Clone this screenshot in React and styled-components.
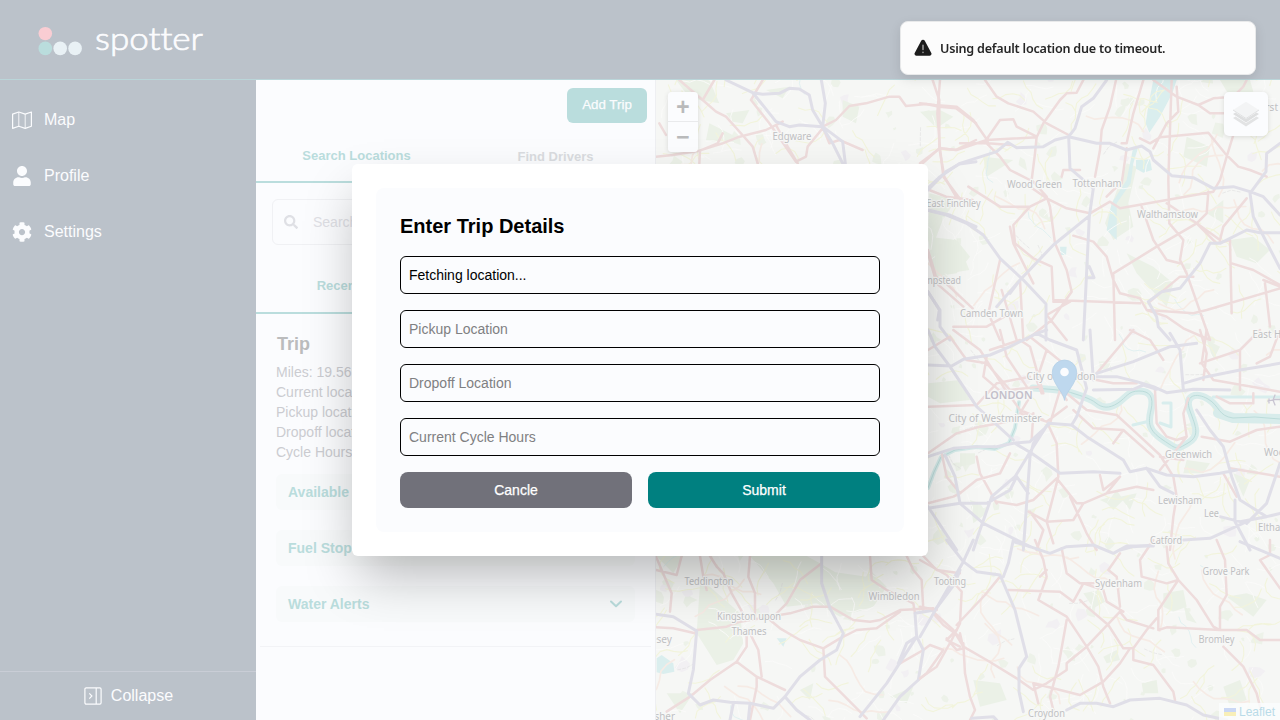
import React from "react";
import styled, { createGlobalStyle } from "styled-components";
import { FaUser, FaCog, FaSearch } from "react-icons/fa";

const GlobalStyle = createGlobalStyle`
  *, *::before, *::after { box-sizing: border-box; }
  body { margin: 0; font-family: "Liberation Sans", Arial, sans-serif; background: #fbfcfe; overflow: hidden; }
  button, input { font: inherit; }
  h2, h3, p { margin: 0; }
`;

const Page = styled.div`
  display: flex;
  flex-direction: column;
  width: 1280px;
  height: 720px;
`;
const Header = styled.header`
  display: flex;
  flex: none;
  height: 80px;
  padding: 20px 36px;
  background: #bbc2ca;
  border-bottom: 1px solid #bad5d9;
`;
const Body = styled.div`
  display: flex;
  flex: 1;
  min-height: 0;
`;
const Sidebar = styled.aside`
  display: flex;
  flex-direction: column;
  flex: none;
  width: 256px;
  background: #bbc2ca;
`;
const Nav = styled.nav`
  display: flex;
  flex-direction: column;
  flex: 1;
  gap: 16px;
  padding-top: 20px;
`;
const NavItem = styled.a`
  display: flex;
  align-items: center;
  gap: 12px;
  height: 40px;
  padding: 0 12px;
  color: #fbfcfe;
  font-size: 16px;
`;
const Collapse = styled.button`
  display: flex;
  align-items: center;
  justify-content: center;
  gap: 9px;
  height: 49px;
  padding: 0 0 0 1px;
  border: 0;
  border-top: 1px solid #c9cdd6;
  background: none;
  color: #fbfcfe;
  font-size: 16px;
`;
const Panel = styled.section`
  display: flex;
  flex-direction: column;
  flex: none;
  width: 400px;
  background: #fbfcfe;
  border-right: 1px solid #eeeff2;
`;
const PanelTop = styled.div`
  display: flex;
  justify-content: flex-end;
  height: 51px;
  padding: 8px 8px 0 0;
`;
const AddTrip = styled.button`
  width: 80px;
  height: 35px;
  padding: 0 0 2px;
  border: 0;
  border-radius: 6px;
  background: #badddd;
  color: #fbfcfe;
  font-size: 13.33px;
  -webkit-text-stroke: 0.25px #fbfcfe;
`;
const Tabs = styled.div`
  display: flex;
  height: ${(p) => p.$height}px;
`;
const Tab = styled.button`
  flex: 1;
  padding: ${(p) => p.$shift || "0"};
  border: 0;
  border-bottom: ${(p) => (p.$active ? "2px solid #badddd" : "0")};
  background: none;
  color: ${(p) => (p.$active ? "#badddd" : "#dadce0")};
  font-size: 13px;
  font-weight: 700;
`;
const SearchBox = styled.div`
  display: flex;
  align-items: center;
  gap: 15px;
  height: 46px;
  margin: 16px 16px 12px;
  padding: 0 11px;
  border: 1px solid #f0f1f4;
  border-radius: 6px;
  color: #dfe0e5;
  font-size: 14px;
`;
const Trip = styled.article`
  margin: 17px 4px 0;
  padding: 0 16px 24px;
  border-bottom: 1px solid #f2f3f6;
`;
const TripTitle = styled.h3`
  height: 31px;
  padding-left: 1px;
  line-height: 27px;
  font-size: 18px;
  color: #bbbcbd;
`;
const TripLine = styled.p`
  height: 20px;
  line-height: 20px;
  font-size: 14px;
  color: #cbccd1;
  white-space: nowrap;
`;
const Sections = styled.div`
  display: flex;
  flex-direction: column;
  gap: 20px;
  margin-top: 12px;
`;
const SectionRow = styled.button`
  display: flex;
  align-items: center;
  justify-content: space-between;
  height: 36px;
  padding: 0 12px;
  border: 0;
  border-radius: 6px;
  background: #f8fafb;
  color: #badddd;
  font-size: 14px;
  font-weight: 700;
`;
const MapArea = styled.main`
  position: relative;
  flex: 1;
  overflow: hidden;
  background: #f6f7f5;
  svg { display: block; }
`;
const ZoomControl = styled.div`
  position: absolute;
  top: 12px;
  left: 12px;
  width: 30px;
  border-radius: 4px;
  overflow: hidden;
  box-shadow: 0 1px 5px rgba(0, 0, 0, 0.12);
`;
const ZoomButton = styled.button`
  display: flex;
  align-items: center;
  justify-content: center;
  width: 30px;
  height: 30px;
  padding: 4px 0 0;
  border: 0;
  border-bottom: ${(p) => (p.$divided ? "1px solid #e9eaec" : "0")};
  background: #fbfcfe;
  color: #b9babb;
  font: 700 23px/28px "Liberation Mono", monospace;
`;
const LayersControl = styled.button`
  position: absolute;
  top: 12px;
  right: 12px;
  display: flex;
  align-items: center;
  justify-content: center;
  width: 44px;
  height: 44px;
  padding: 0;
  border: 0;
  border-radius: 5px;
  background: #fbfcfe;
  box-shadow: 0 1px 5px rgba(0, 0, 0, 0.12);
`;
const Attribution = styled.div`
  position: absolute;
  right: 0;
  bottom: 0;
  display: flex;
  align-items: center;
  gap: 3px;
  height: 17px;
  padding: 0 5px;
  background: rgba(251, 252, 254, 0.8);
  color: #b9dbe8;
  font-size: 12px;
`;
const Overlay = styled.div`
  position: fixed;
  inset: 0;
  display: flex;
  align-items: center;
  justify-content: center;
`;
const Modal = styled.div`
  width: 576px;
  padding: 24px;
  border-radius: 6px;
  background: #fff;
  box-shadow: 0 25px 50px -7px rgba(0, 0, 0, 0.28);
`;
const Form = styled.form`
  display: flex;
  flex-direction: column;
  gap: 16px;
  padding: 24px;
  border-radius: 8px;
  background: #fbfcfe;
`;
const FormTitle = styled.h2`
  font-size: 20px;
  line-height: 28px;
  color: #000;
`;
const Field = styled.input`
  height: 38px;
  padding: 0 8px;
  border: 1px solid #000;
  border-radius: 6px;
  outline: 0;
  background: transparent;
  color: #000;
  font-size: 14px;
  &::placeholder { color: #7f8082; opacity: 1; }
`;
const Actions = styled.div`
  display: flex;
  gap: 16px;
`;
const Action = styled.button`
  flex: 1;
  height: 36px;
  padding: 0;
  border: 0;
  border-radius: 8px;
  background: ${(p) => (p.$primary ? "#008080" : "#71717a")};
  color: #fff;
  font-size: 14px;
  -webkit-text-stroke: 0.25px #fff;
`;
const Toast = styled.div`
  position: fixed;
  top: 21px;
  right: 24px;
  display: flex;
  align-items: center;
  gap: 8px;
  width: 356px;
  height: 54px;
  padding: 0 13px;
  border: 1px solid #e8e9ea;
  border-radius: 8px;
  background: #fcfcfc;
  box-shadow: 0 4px 12px rgba(0, 0, 0, 0.1);
  color: #262626;
  font: 600 12.6px "Noto Sans", "Open Sans", sans-serif;
  letter-spacing: -0.22px;
`;
const Wordmark = styled.text`
  font-family: Lato, sans-serif;
  font-size: 31.5px;
  font-weight: 300;
  font-variant-ligatures: none;
  fill: #fbfcfe;
  stroke: #fbfcfe;
  stroke-width: 0.7px;
`;

const Logo = () => (
  <svg width="172" height="44" viewBox="36 20 172 44" overflow="visible">
    <ellipse cx="45.3" cy="33.6" rx="6.8" ry="6.7" fill="#f9cdd3" />
    <ellipse cx="45.3" cy="48.4" rx="6.8" ry="6.9" fill="#badddd" />
    <ellipse cx="60.2" cy="48.4" rx="6.8" ry="6.9" fill="#e9f1f5" />
    <ellipse cx="75.1" cy="48.4" rx="6.8" ry="6.9" fill="#e9f1f5" />
    <Wordmark x="95" y="50" textLength="108" lengthAdjust="spacingAndGlyphs">spotter</Wordmark>
  </svg>
);

const MapIcon = () => (
  <svg width="20" height="20" viewBox="0 0 20 20" fill="none" stroke="currentColor" strokeLinejoin="round">
    <path strokeWidth="1.2" d="M.6 4.1 6.8 2 13.2 4.1 19.4 2V16.3L13.2 18.4 6.8 16.3.6 18.4Z" />
    <path strokeWidth=".9" d="M6.8 2V16.3M13.2 4.1V18.4" />
  </svg>
);

const CollapseIcon = () => (
  <svg width="18" height="18" viewBox="0 0 18 18" fill="none" stroke="currentColor" strokeWidth="1.2">
    <rect x=".9" y=".9" width="16.2" height="16.2" rx="1.3" />
    <path d="M12.2 1V17M5.3 6.4 7.9 9 5.3 11.6" />
  </svg>
);

const Chevron = () => (
  <svg width="14" height="10" viewBox="0 0 14 10" fill="none" stroke="currentColor" strokeWidth="2" strokeLinecap="round" strokeLinejoin="round">
    <path d="M2 2.5 7 7.3 12 2.5" />
  </svg>
);

/* Small side streets and parks, spread by a fixed pseudo-random sequence. */
const makeRandom = (seed) => () => {
  seed = (seed * 16807) % 2147483647;
  return seed / 2147483647;
};
const random = makeRandom(91);
const wander = (steps, reach) => {
  let x = 650 + random() * 640;
  let y = 75 + random() * 650;
  let angle = random() * 6.28;
  let d = `M${x.toFixed(1)} ${y.toFixed(1)}`;
  for (let i = 0; i < steps; i++) {
    angle += (random() - 0.5) * 1.3;
    x += Math.cos(angle) * reach;
    y += Math.sin(angle) * reach;
    d += `L${x.toFixed(1)} ${y.toFixed(1)}`;
  }
  return d;
};
const blob = (size) => {
  const cx = 650 + random() * 640;
  const cy = 75 + random() * 650;
  const points = [];
  for (let i = 0; i < 7; i++) {
    const r = size * (0.4 + random() * 0.8);
    points.push(`${(cx + Math.cos(i * 0.9) * r).toFixed(1)} ${(cy + Math.sin(i * 0.9) * r).toFixed(1)}`);
  }
  return `M${points.join("L")}Z`;
};
const repeat = (count, make) => Array.from({ length: count }, make).join("");
const parks = repeat(260, () => blob(2 + random() * 6));
const estates = repeat(70, () => blob(3 + random() * 6));
const whiteLanes = repeat(420, () => wander(4, 7));
const lanes = repeat(380, () => wander(5, 7));
const avenues = repeat(46, () => wander(7, 9));
const streams = repeat(16, () => wander(6, 6));
const rails = repeat(22, () => wander(2, 9));

/* Main roads by map sheet; each sheet keeps its own origin and is drawn at one third. */
const sheets = [
  {
    x: 656, y: 80,
    green: "M60 0 160 0 190 70 130 60 90 40ZM210 100 280 90 260 130 230 125ZM160 130 240 170 200 190 150 180ZM330 30 400 20 380 55ZM560 60 610 80 600 130 560 110ZM820 340 900 360 860 420 830 500 816 480ZM850 500 920 520 940 570 880 580Z",
    water: "",
    purple: "M210 0 290 38 300 50 360 125 400 140 430 135 498 140M290 38 320 43 370 40 400 25 430 27 460 45 470 90 500 140M496 0 508 70 500 140 560 185 568 250M498 140 530 190 560 250M816 330 870 275 910 252 960 245M816 390 880 405 960 440M816 635 850 690 845 720",
    red: "M175 0 140 60 70 0M140 60 180 95 210 110 262 168M0 230 50 225 130 212 200 190 245 172 330 150 380 125M320 0 285 60 340 130 420 245 450 230 455 200 500 145M262 168 290 200 305 250M130 250 132 212 185 190 200 160M500 140 540 120 580 78 630 70 700 50 730 50 750 78 810 72 850 80 900 85 960 130M830 0 850 60 850 205 865 290 900 350M850 205 900 210 960 180M800 250 850 205M500 140 520 190 550 180 620 210M820 330 870 350 950 360M816 510 840 590 870 610 950 685M10 130 30 165M360 135 395 200 425 250",
  },
  {
    x: 920, y: 80,
    green: "M0 95 60 90 100 110 50 145ZM24 470 110 480 150 530 110 580 40 590ZM620 250 650 260 625 370 640 440 580 480 555 430ZM860 400 910 360 910 430ZM930 480 1000 470 1050 510 1010 550 950 530ZM620 520 700 560 760 610 740 680 650 580ZM800 170 870 200 860 260 790 230ZM900 0 990 0 1000 35 930 50ZM190 230 280 240 200 290Z",
    water: "M700 0 770 0 757 40 720 110 688 158 677 130 690 50ZM648 240 690 238 696 270 670 278 648 266ZM590 370 632 310 640 250 655 200 640 200 620 300 575 370 560 450 590 480ZM420 500 440 500 438 525 422 525Z",
    purple: "M560 0 520 55 485 80 465 145 446 170 405 180 370 200 290 203 263 187 230 215 120 250 60 290 20 328M446 170 450 265 520 325 508 410 490 780M446 170 530 190 570 190 620 210 665 198 690 215 700 240 755 287 820 293 880 325 940 320 990 335 1030 350 1080 405M1080 190 1040 220 1038 275 990 340 1000 410 1080 565M20 390 80 405 140 430 190 465 240 535 310 600 378 672 378 780M505 410 400 495 300 600 230 680M1080 458 1020 458 980 450 900 490 870 490 840 550 780 625 725 635 685 665 710 710 715 740 750 780M20 630 60 690 60 740 90 780M300 600 270 640M508 560 522 593 500 593",
    red: "M195 0 230 50 265 70 340 95 380 130 446 165M0 70 45 75 110 80 160 120 200 178 205 190 270 195M60 0 52 100 60 205 70 290 130 370M0 250 60 205 110 210 200 180 350 172 370 130 420 60 440 40 470 38 490 0M200 178 240 120 280 118 290 140 350 170 345 220 335 300 380 350 390 380 405 490 440 570 455 635 395 720 320 780M588 0 570 80 545 150 540 210 525 290M605 190 620 190 640 100 670 0M620 205 605 310 580 330 560 350M120 190 200 190 240 230 270 270 330 300M480 270 430 270 425 290M145 320 240 380 330 380 380 355 330 320M380 355 440 385 510 400 570 365 600 385 740 360 880 335 900 300 920 230 940 165M700 0 770 50 835 75 880 55 940 50 970 20 980 0M770 20 775 95 740 130 700 205M660 175 690 190 720 172 865 158 915 220 955 260 990 270M755 0 745 300 748 430 790 480 780 540 800 580 870 780M835 75 870 100 910 100M665 380 700 480 740 540 780 550M580 580 710 500 830 430 860 400 865 335M830 430 900 480 910 440 980 355M740 370 830 430 890 490 930 480 935 700M240 380 330 380 280 435 285 490 340 535 395 560 400 660 660 670M270 440 280 490 340 610M460 467 520 485 560 530 580 600 600 640 660 655 680 690 740 710 790 745 870 780M400 665 450 665 380 705 440 780M300 600 310 780M240 540 205 700 240 780M245 630 290 780M580 585 585 780M24 520 50 610 130 680M990 270 1040 290M1030 600 1080 620M1035 610 1050 740M680 690 820 700 860 690 1080 625M935 550 1000 570 1080 615M100 740 200 740 270 700M820 590 780 590 690 665",
  },
  {
    x: 920, y: 330,
    green: "M25 160 120 150 150 210 60 220 24 200ZM120 370 165 370 165 400 120 410ZM800 390 870 400 850 430 790 430ZM590 480 610 510 580 540 560 520ZM540 510 570 500 560 520ZM150 510 180 520 200 550 160 580ZM940 430 990 450 970 500ZM860 30 900 50 880 90ZM600 500 650 490 630 540Z",
    water: "",
    purple: "M24 105 95 108 130 88 210 75 270 50 350 10 380 0M90 110 45 50 24 0M90 110 130 170 170 230M350 10 390 30 470 60 500 175 470 260 455 285 385 280 340 340 330 380 310 660M530 140 590 140 650 155 700 170 740 188 820 178 930 180M520 180 640 178 670 165 710 178M530 130 640 95 750 50 830 40M750 10 780 60 790 180M790 160 860 140 960 120 1080 100M455 285 500 320 610 390 630 425 680 415 740 435 820 440 900 430 950 420M385 280 340 350 285 440 215 500 180 600 160 660M285 340 335 370 420 430 520 425 600 430M24 380 100 355 170 350 230 350 280 340 330 335 385 285M24 535 120 520 200 520 270 480 290 440 325 490M75 375 105 440 120 520 190 580 330 650M24 530 110 660M680 415 720 470 760 490M830 240 870 300 910 350 935 440 960 510 1040 560 1080 550M900 560 960 575 1040 560 1080 550M945 510 945 575 990 660M790 630 870 625 980 575M600 660 640 650 700 645M1080 400 1040 520 980 580M170 230 280 330M510 0 520 150",
    red: "M24 230 170 225 230 160 330 140M24 60 90 20 140 90 200 100 270 180 360 170M100 0 180 60 250 170 300 240 370 270M200 80 190 140 260 200M210 60 300 30 330 50 370 190M240 0 260 80 320 170M330 20 380 60 480 140 580 160 650 160M380 60 350 150 365 190M440 190 500 240 590 255 650 310 720 375 760 440 770 500 760 560 750 660M390 280 420 180 440 210M330 200 300 250 380 275 440 230M340 250 335 330M385 285 410 340 415 440 380 575 325 545M24 370 110 310 180 290 290 270M65 370 80 440 120 490 100 500 24 520M270 370 240 430 170 450 120 490M170 380 180 430 230 520M230 515 290 525 340 510 410 445 470 520 490 520 560 490 600 440M490 520 460 570 380 575M380 575 400 640M330 545 370 600 350 660M450 500 500 610 530 660M540 435 550 480 600 440M580 340 610 300 700 380M460 240 520 295 610 300M705 180 710 280 740 320 770 330 800 320 790 250 805 205M800 320 720 420M720 380 790 390M845 320 930 335 1010 300 1080 290M860 0 845 100 880 150 1080 185M840 100 960 60 1020 0M960 60 960 180M1000 190 1000 220 930 220 890 200M930 415 1080 440M910 430 950 500M1080 0 1050 80 1010 100M530 130 640 0M630 0 690 30 730 90M840 0 860 70 850 150M560 490 650 470 700 480",
  },
  {
    x: 640, y: 550,
    green: "M180 100 210 110 300 190 310 280 280 330 230 345 170 250ZM330 18 500 18 540 40 660 110 690 60 740 110 700 170 600 200 530 160 440 170 400 100ZM48 18 130 18 100 70ZM540 60 680 80 640 170 560 160ZM80 430 160 430 120 490ZM750 440 820 410 800 460ZM480 420 520 400 510 450Z",
    water: "M50 325 65 315 100 340 103 365 70 372 50 367ZM410 265 440 265 430 290Z",
    purple: "M48 193 100 200 170 243 160 360 145 430 180 465 220 450 270 457 330 460 400 475 435 440 480 380 540 330 590 300 610 250 570 175 545 100 545 18M270 510 280 460M325 510 330 460M435 440 470 480 510 510M660 500 740 400 830 260M830 260 825 190 885 180 945 100 960 60M830 260 850 300 835 390 780 440 730 510M775 340 800 280 830 260",
    red: "M48 20 95 130 90 185M48 60 110 75 125 18M210 18 230 50 250 70 275 130 320 210M180 18 190 80 200 120M330 18 325 80 345 130 345 210M48 232 100 235 165 250 170 240 260 230 300 215M300 215 450 190 520 170 570 170 640 210 690 215 720 210 780 180 880 175M410 190 440 160 480 90 545 40M390 210 420 235 480 270 550 295 555 380 600 425 680 505M320 240 320 290 290 335 210 390 150 440 80 485M330 250 355 300 365 380M290 335 350 380 435 420M350 380 350 410 330 510M550 295 600 265 650 240 710 235 780 185M690 18 695 90 740 120 820 160 825 190M800 18 820 60 845 90 850 180M850 18 890 60 960 70M880 190 910 225 960 260M950 240 920 270 960 290M780 340 850 300 870 285 910 300 860 370 835 390",
  },
  {
    x: 920, y: 540,
    green: "M730 160 790 150 800 200 760 215 730 200ZM490 160 540 150 555 185 520 205ZM920 170 980 160 1040 180 1000 230ZM790 190 830 250 800 240ZM550 350 590 330 600 360 560 370ZM910 440 960 420 980 480 930 500ZM665 430 710 420 715 460 670 460ZM160 420 240 430 260 480 180 500Z",
    water: "",
    purple: "M80 0 130 65 0 290M160 0 130 65 170 95 240 105 285 210 320 350 297 385 297 455 310 515M280 0 265 70 250 110M280 5 330 20 390 40 440 20 520 15 580 40 620 18 700 18M440 510 480 490 530 490 580 500 630 480 720 475 800 495 850 525 920 540M960 5 1080 55M155 535 220 530 230 540",
    red: "M0 60 80 105 125 155 120 250 95 300 50 380 0 415M45 220 100 270 130 320 200 360 290 415 340 450 380 430 440 390 440 370 500 320 600 215M240 110 195 165 110 255M130 310 135 400 150 470 165 510 150 540M265 150 420 155 460 185 490 130 550 150 560 185 610 215M345 0 370 60 380 110 355 180 440 230 500 320 535 380 550 440 570 490M425 25 440 100 480 130 520 130M600 40 565 90 590 110 600 200M380 90 360 110M600 215 620 240 700 265M700 0 660 60 665 110 740 130 775 120 735 180 715 210 715 270 740 262 800 265 900 270 980 270 1020 300 1080 300M740 20 745 70 775 120 830 180 880 260 900 270 900 200 920 165 915 60 890 0M1050 0 1050 45 1020 60 1080 145M565 255 610 325 640 325 680 270 710 235M565 255 500 200 480 180M440 240 415 380 390 470 400 510M550 425 480 465 340 430 355 490M640 325 640 360 700 375 760 455 765 480M910 320 970 380 1010 460 1020 500M0 200 50 210M80 295 110 330 130 325 120 280M630 325 600 370 550 425",
  },
];

const labels = [
  ["Edgware", 792, 140, 39], ["Wood Green", 1034.5, 188, 55], ["Tottenham", 1097, 186.5, 49],
  ["East Finchley", 953.5, 207, 54], ["Walthamstow", 1167.5, 217.5, 61], ["Hampstead", 937, 283.5, 48],
  ["Camden Town", 991.5, 317, 63], ["East Ham", 1274, 338, 43], ["City of London", 1061, 379.5, 69],
  ["City of Westminster", 995, 422, 93], ["Greenwich", 1188.5, 458, 47], ["Woolwich", 1286, 456, 44],
  ["Lewisham", 1180, 503.5, 44], ["Lee", 1211.5, 517, 15], ["Eltham", 1273.5, 531, 31],
  ["Catford", 1166, 543.5, 32], ["Grove Park", 1226, 575, 47], ["Sydenham", 1118.5, 587, 47],
  ["Tooting", 950, 585, 32], ["Teddington", 709, 584.5, 49], ["Wimbledon", 894, 599.5, 51],
  ["Kingston upon", 749, 619.5, 64], ["Thames", 749, 634.5, 35], ["Bromley", 1216.5, 643, 36],
  ["Molesey", 652.5, 643, 39], ["Esher", 662, 720, 26], ["Croydon", 1046.5, 716.5, 37],
  ["Chislehurst", 1251.5, 111, 53],
];

const pinned = "M1064.5 400C1063.2 391.5 1052.3 384 1052.3 372.2A12.2 12.2 0 0 1 1076.7 372.2C1076.7 384 1065.8 391.5 1064.5 400Z";
const thames = "M1033 388 1053 389.5 1066 391C1078 395 1090 398 1096 403S1109 409 1118 403 1128 391 1139 391 1154 397 1151 410 1148 430 1163 440 1176 450 1188 443 1196 427 1190 411 1196 392 1208 399 1218 416 1233 418L1255 417 1280 419";
const upperThames = "M1019 402 1015 428 1009 443 995 449 976 447 955 450 941 457 934 472 928 488";

const LondonMap = () => (
  <svg width="624" height="640" viewBox="656 80 624 640" fill="none" strokeLinejoin="round" strokeLinecap="round">
    <rect x="656" y="80" width="624" height="640" fill="#f6f7f5" />
    <path d={parks} fill="#edf2e9" />
    <path d={estates} fill="#f2f0f3" />
    {sheets.map((s) => (
      <g key={`land-${s.x}-${s.y}`} transform={`translate(${s.x} ${s.y}) scale(.33333)`}>
        <path d={s.green} fill="#ebf1e7" />
        <path d={s.water} fill="#daeeee" />
      </g>
    ))}
    <path d={whiteLanes} stroke="#fafaf9" strokeWidth=".9" />
    <path d={rails} stroke="#e3e3e3" strokeWidth=".7" strokeDasharray="3 2" />
    <path d={lanes} stroke="#f2f4dc" strokeWidth="1.1" />
    <path d={streams} stroke="#dceff0" strokeWidth=".8" />
    <path d={avenues} stroke="#f6ebe5" strokeWidth="1.7" />
    <path d={upperThames} stroke="#d6ebea" strokeWidth="4" />
    <path d={thames} stroke="#d8eceb" strokeWidth="7" />
    <path d="M1218 413 1233 418 1280 419" stroke="#d8eceb" strokeWidth="10" />
    <path d="M1213 397H1280M1133 425 1150 421M1160 423 1171 427V403H1163" stroke="#d8eded" strokeWidth="3" />
    <path d={`${thames}${upperThames}`} stroke="#bcdcda" strokeWidth="1" />
    {sheets.map((s) => (
      <g key={`road-${s.x}-${s.y}`} transform={`translate(${s.x} ${s.y}) scale(.33333)`}>
        <path d={s.red} stroke="#eedcdc" strokeWidth="7.5" />
        <path d={s.purple} stroke="#e0dfe8" strokeWidth="9" />
      </g>
    ))}
    <path d="M1268 401 1275 399.5 1280 399.5M1275 395 1273 400 1275 405M1269 399V403" stroke="#c9c5d2" strokeWidth="1.3" />
    <g fontFamily='"Noto Sans", sans-serif' fontSize="11.4" textAnchor="middle" fill="#bfc0c2" stroke="#f7f8f7" strokeWidth="2.5" paintOrder="stroke">
      {labels.map(([name, x, y, width]) => (
        <text key={name} x={x} y={y} textLength={width} lengthAdjust="spacingAndGlyphs">{name}</text>
      ))}
      <text x="1008.5" y="398.5" textLength="48" lengthAdjust="spacingAndGlyphs" fontWeight="600" fill="#c3bfca">LONDON</text>
    </g>
    <path d={pinned} fill="#bed8ee" stroke="#b5d0e7" strokeWidth=".8" />
    <circle cx="1064.5" cy="372" r="4.3" fill="#fbfcfe" />
  </svg>
);

const LayersIcon = () => (
  <svg width="26" height="26" viewBox="0 0 26 26">
    <path d="M0 17 13 25.5 26 17 23.5 15.4 13 22 2.5 15.4Z" fill="#e2e3e4" />
    <path d="M0 13 13 21.5 26 13 23.5 11.4 13 18 2.5 11.4Z" fill="#dedfe0" />
    <path d="M0 9 13 17.5 26 9 13 .8Z" fill="#f3f4f5" />
    <path d="M0 9 13 17.5 26 9" fill="none" stroke="#e0e1e2" strokeWidth="1" />
  </svg>
);

const Flag = () => (
  <svg width="12" height="8" viewBox="0 0 12 8">
    <path fill="#cbd8f5" d="M0 0H12V4H0Z" />
    <path fill="#f8efb9" d="M0 4H12V8H0Z" />
  </svg>
);

const WarningIcon = () => (
  <svg width="18" height="18" viewBox="0 0 18 18">
    <path d="M7.2 1.7a2.05 2.05 0 0 1 3.6 0l6.5 12.2a2 2 0 0 1-1.8 2.9h-13a2 2 0 0 1-1.8-2.9Z" fill="#1c1c1c" />
    <path d="M9 6.2V10.6M9 13.2V13.6" stroke="#b5b5b5" strokeWidth="1.3" strokeLinecap="round" />
  </svg>
);

const tripLines = ["Miles: 19.56", "Current location:", "Pickup location:", "Dropoff location:", "Cycle Hours:"];
const fields = ["Pickup Location", "Dropoff Location", "Current Cycle Hours"];

export default function App() {
  return (
    <Page>
      <GlobalStyle />
      <Header><Logo /></Header>
      <Body>
        <Sidebar>
          <Nav>
            <NavItem><MapIcon />Map</NavItem>
            <NavItem><FaUser size={20} />Profile</NavItem>
            <NavItem><FaCog size={20} />Settings</NavItem>
          </Nav>
          <Collapse><CollapseIcon />Collapse</Collapse>
        </Sidebar>
        <Panel>
          <PanelTop><AddTrip>Add Trip</AddTrip></PanelTop>
          <Tabs $height={52}>
            <Tab $active $shift="0 0 2px 1px">Search Locations</Tab>
            <Tab $shift="0 0 2px">Find Drivers</Tab>
          </Tabs>
          <SearchBox><FaSearch size={14} />Search</SearchBox>
          <Tabs $height={57}>
            <Tab $active $shift="2px 0 0">Recent Trips</Tab>
            <Tab />
          </Tabs>
          <Trip>
            <TripTitle>Trip</TripTitle>
            {tripLines.map((line) => <TripLine key={line}>{line}</TripLine>)}
            <Sections>
              <SectionRow>Available<Chevron /></SectionRow>
              <SectionRow>Fuel Stops<Chevron /></SectionRow>
              <SectionRow>Water Alerts<Chevron /></SectionRow>
            </Sections>
          </Trip>
        </Panel>
        <MapArea>
          <LondonMap />
          <ZoomControl>
            <ZoomButton $divided>+</ZoomButton>
            <ZoomButton>−</ZoomButton>
          </ZoomControl>
          <LayersControl><LayersIcon /></LayersControl>
          <Attribution><Flag />Leaflet</Attribution>
        </MapArea>
      </Body>
      <Overlay>
        <Modal>
          <Form>
            <FormTitle>Enter Trip Details</FormTitle>
            <Field defaultValue="Fetching location..." />
            {fields.map((name) => <Field key={name} placeholder={name} />)}
            <Actions>
              <Action type="button">Cancle</Action>
              <Action type="button" $primary>Submit</Action>
            </Actions>
          </Form>
        </Modal>
      </Overlay>
      <Toast><WarningIcon />Using default location due to timeout.</Toast>
    </Page>
  );
}
